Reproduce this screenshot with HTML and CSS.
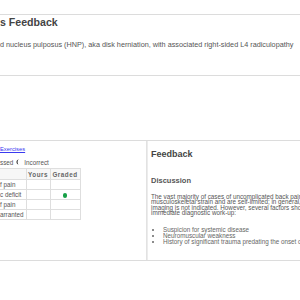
FILE: index.html
```html
<!DOCTYPE html>
<html lang="en">
<head>
    <meta charset="UTF-8">
    <meta name="viewport" content="width=device-width, initial-scale=1.0">
    <title>Case Feedback</title>
    <link rel="stylesheet" href="styles.css">
</head>
<body>

    <!-- Case header -->
    <div class="case-head">
        <h1>s Feedback</h1>
        <p class="dx">d nucleus pulposus (HNP), aka disk herniation, with associated right-sided L4 radiculopathy</p>
    </div>

    <!-- Grades + feedback -->
    <div class="panels">
        <div class="left">
            <a href="#" class="back">Exercises</a>
            <div class="legend">
                ssed
                <svg class="half" width="5" height="6" viewBox="0 0 10 12">
                    <path d="M6 1 A5 5 0 0 0 6 11 A3 5 0 0 1 6 1 Z" fill="#222"/>
                </svg>
                Incorrect
            </div>
            <table class="grades">
                <tr><th></th><th>Yours</th><th>Graded</th></tr>
                <tr><td>f pain</td><td></td><td></td></tr>
                <tr><td>c deficit</td><td></td><td><span class="dot"></span></td></tr>
                <tr><td>f pain</td><td></td><td></td></tr>
                <tr><td>arranted</td><td></td><td></td></tr>
            </table>
        </div>
        <div class="right">
            <h2>Feedback</h2>
            <h3>Discussion</h3>
            <p>The vast majority of cases of uncomplicated back pain are due to<br>
            musculoskeletal strain and are self-limited; in general, diagnostic<br>
            imaging is not indicated. However, several factors should prompt an<br>
            immediate diagnostic work-up:</p>
            <ul>
                <li>Suspicion for systemic disease</li>
                <li>Neuromuscular weakness</li>
                <li>History of significant trauma predating the onset of pain</li>
            </ul>
        </div>
    </div>

</body>
</html>
```

FILE: styles.css
```css
* {
    margin: 0;
    padding: 0;
    box-sizing: border-box;
    font-family: "Liberation Sans", Arial, sans-serif;
}

body {
    background: white;
    color: #555;
    overflow: hidden;
    width: 300px;
    height: 300px;
}

.case-head {
    margin-top: 14px;
    height: 62px;
    border-top: 1px solid #dcdcdc;
    border-bottom: 1px solid #dcdcdc;
}

.case-head h1 {
    font-size: 10.6px;
    line-height: 12px;
    font-weight: bold;
    color: #444;
    margin-top: 1px;
    white-space: nowrap;
}

.dx {
    font-size: 7.25px;
    line-height: 9px;
    margin-top: 11.5px;
    white-space: nowrap;
    color: #555;
}

.panels {
    display: flex;
    width: 460px;
    height: 121px;
    margin-top: 64px;
    border-top: 1px solid #dcdcdc;
    border-bottom: 1px solid #dcdcdc;
}

.left {
    width: 147px;
    flex-shrink: 0;
    border-right: 1px solid #e2e2e2;
    padding-top: 4.5px;
}

.back {
    display: block;
    font-size: 5.8px;
    line-height: 7px;
    color: #3a3af0;
    text-decoration: underline;
}

.legend {
    display: flex;
    align-items: center;
    gap: 3px;
    font-size: 6.3px;
    line-height: 7px;
    margin-top: 6px;
    color: #555;
    white-space: nowrap;
}

.half {
    display: block;
}

.grades {
    border-collapse: collapse;
    margin-top: 2.5px;
    font-size: 6.3px;
    color: #555;
}

.grades th,
.grades td {
    border: 1px solid #dedede;
    height: 10px;
    white-space: nowrap;
}

.grades th {
    height: 11px;
    font-weight: bold;
    color: #666;
    letter-spacing: 0.5px;
    background: #f7f7f7;
}

.grades th:first-child,
.grades td:first-child {
    border-left: none;
    width: 26px;
    text-align: left;
}

.grades th:nth-child(2),
.grades td:nth-child(2) {
    width: 24px;
    text-align: center;
}

.grades th:nth-child(3),
.grades td:nth-child(3) {
    width: 30px;
    text-align: center;
}

.dot {
    display: inline-block;
    width: 4.5px;
    height: 4.5px;
    border-radius: 50%;
    background: #16a047;
    vertical-align: middle;
}

.right {
    flex: 1;
    border-left: 1px solid #ececec;
    padding-left: 3px;
    white-space: nowrap;
}

.right h2 {
    font-size: 9px;
    line-height: 11px;
    font-weight: bold;
    color: #444;
    margin-top: 8px;
}

.right h3 {
    font-size: 7.5px;
    line-height: 9px;
    font-weight: bold;
    color: #555;
    margin-top: 15.5px;
}

.right p {
    font-size: 6.3px;
    line-height: 5.6px;
    margin-top: 9px;
    color: #555;
}

.right ul {
    list-style: disc;
    font-size: 6.3px;
    line-height: 6.3px;
    margin-top: 11px;
    padding-left: 12px;
    color: #666;
}
```
